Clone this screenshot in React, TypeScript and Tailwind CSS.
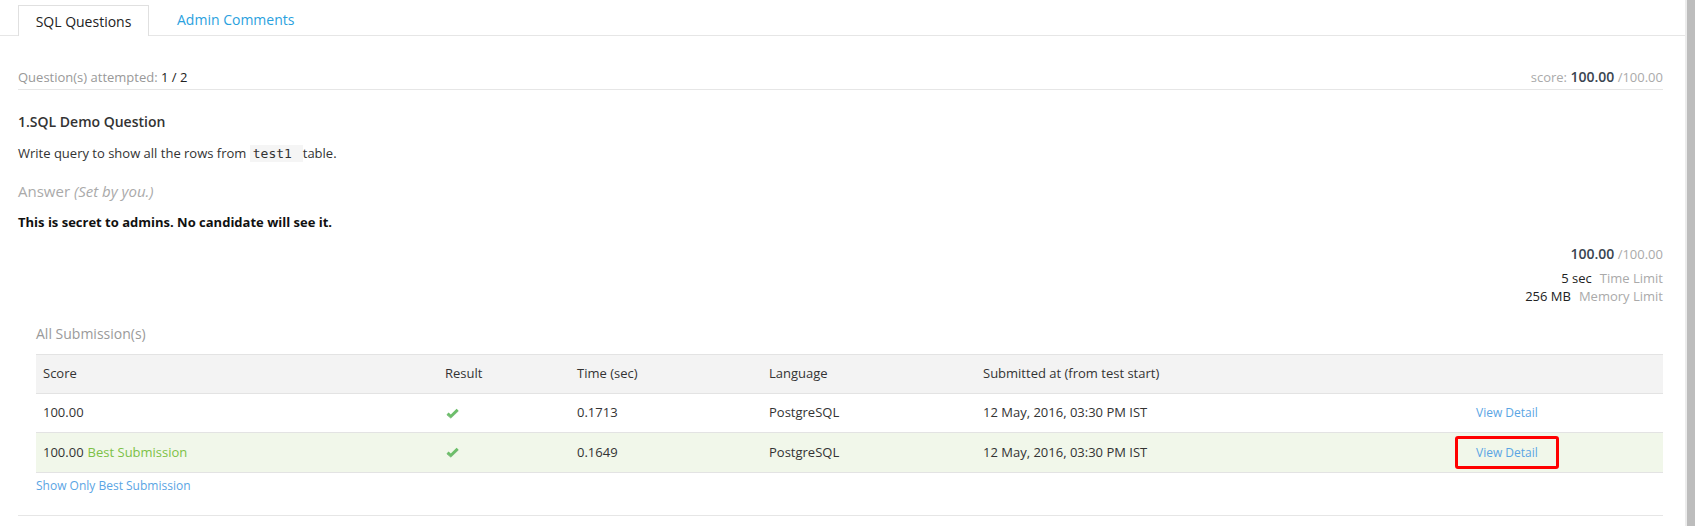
import React from "react";

const Check = () => (
  <svg width="13" height="11" viewBox="0 0 13 11" className="block">
    <path d="M0.8 6.2 L2.6 4.6 L4.8 6.6 L10.6 0.8 L12.4 2.4 L4.8 10 Z" fill="#6cbf6a" />
    <path d="M0.8 6.2 L4.8 10 L12.4 2.4 L12.4 3.2 L4.8 10.6 L0.8 7 Z" fill="#4a9a4a" />
  </svg>
);

const cols = "grid grid-cols-[402px_132px_192px_214px_493px_1fr]";

export default function App() {
  const rows = [
    { score: "100.00", best: false, time: "0.1713" },
    { score: "100.00", best: true, time: "0.1649" },
  ];
  return (
    <div
      className="flex h-[526px] w-[1695px] overflow-hidden bg-white text-[#333]"
      style={{ fontFamily: '"Open Sans", "Noto Sans", sans-serif' }}
    >
      <div className="w-[1685px] shrink-0">
        {/* Tabs */}
        <div className="flex h-[36px] items-end border-b border-[#e6e6e6] pl-[18px]">
          <div className="-mb-px flex h-[31px] w-[131px] items-center justify-center border border-b-0 border-[#e0e0e0] bg-white text-[14px] text-[#222]">
            SQL Questions
          </div>
          <div className="ml-[28px] flex h-[31px] items-center text-[14px] text-[#2aa1de]">
            Admin Comments
          </div>
        </div>

        <div className="pl-[18px] pr-[22px]">
          {/* attempted */}
          <div className="mt-[31px] flex justify-between border-b border-[#e6e6e6] pb-[2px] leading-[20px]">
            <div className="text-[13px] text-[#999]">
              Question(s) attempted: <span className="text-[#222]">1 / 2</span>
            </div>
            <div className="text-[13px] text-[#aaa]">
              score: <span className="text-[14px] font-semibold text-[#3a4550]">100.00</span> /100.00
            </div>
          </div>

          <div className="mt-[22px] text-[14px] font-semibold leading-[20px] text-[#333]">
            1.SQL Demo Question
          </div>
          <div className="mt-[11px] text-[13px] leading-[20px] text-[#333]">
            Write query to show all the rows from{" "}
            <code
              className="bg-[#f5f5f5] px-[3px] py-[1px] text-[13px]"
              style={{ fontFamily: '"DejaVu Sans Mono", "Liberation Mono", monospace' }}
            >
              test1{" "}
            </code>{" "}
            table.
          </div>
          <div className="mt-[16px] text-[15px] leading-[22px] text-[#aaa]">
            <span>Answer</span> <span className="italic">(Set by you.)</span>
          </div>
          <div className="mt-[10px] text-[13px] font-bold leading-[20px] text-[#111]">
            This is secret to admins. No candidate will see it.
          </div>

          <div className="flex flex-col items-end">
            <div className="mt-[12px] leading-[20px] text-[13px] text-[#aaa]">
              <span className="text-[14px] font-semibold text-[#3a4550]">100.00</span> /100.00
            </div>
            <div className="mt-[5px] text-[13px] leading-[18px]">
              <span className="text-[#222]">5 sec</span>
              <span className="ml-[8px] text-[#aaa]">Time Limit</span>
            </div>
            <div className="text-[13px] leading-[18px]">
              <span className="text-[#222]">256 MB</span>
              <span className="ml-[8px] text-[#aaa]">Memory Limit</span>
            </div>
          </div>

          <div className="pl-[18px]">
            <div className="mt-[19px] text-[14px] leading-[20px] text-[#9a9a9a]">All Submission(s)</div>

            <div className="mt-[10px] text-[13px] text-[#333]">
              <div className={`${cols} h-[40px] items-center border-y border-[#e3e3e3] bg-[#f3f3f3]`}>
                <div className="pl-[7px]">Score</div>
                <div className="pl-[7px]">Result</div>
                <div className="pl-[7px]">Time (sec)</div>
                <div className="pl-[7px]">Language</div>
                <div className="pl-[7px]">Submitted at (from test start)</div>
                <div />
              </div>
              {rows.map((r, i) => (
                <div
                  key={i}
                  className={`${cols} ${r.best ? "h-[40px] bg-[#f1f7ea]" : "h-[39px] bg-white"} items-center border-b border-[#e3e3e3]`}
                >
                  <div className="pl-[7px]">
                    {r.score}
                    {r.best && <span className="ml-[4px] text-[#7cc146]">Best Submission</span>}
                  </div>
                  <div className="pl-[8px]">
                    <Check />
                  </div>
                  <div className="pl-[7px]">{r.time}</div>
                  <div className="pl-[7px]">PostgreSQL</div>
                  <div className="pl-[7px]">12 May, 2016, 03:30 PM IST</div>
                  <div className="pl-[7px] text-[12px]">
                    {r.best ? (
                      <span className="-ml-[21px] inline-flex h-[33px] items-center rounded-[3px] border-[3px] border-[#ff0000] px-[18px] text-[#5aa5e4]">
                        View Detail
                      </span>
                    ) : (
                      <span className="text-[#5aa5e4]">View Detail</span>
                    )}
                  </div>
                </div>
              ))}
            </div>

            <div className="mt-[4px] text-[12px] leading-[18px] text-[#5aa5e4]">Show Only Best Submission</div>
          </div>

          <div className="mt-[20px] border-t border-[#e6e6e6]" />
        </div>
      </div>
      <div className="h-full w-[10px] border-l-2 border-[#ececec] bg-[#bdbdbd]" />
    </div>
  );
}
